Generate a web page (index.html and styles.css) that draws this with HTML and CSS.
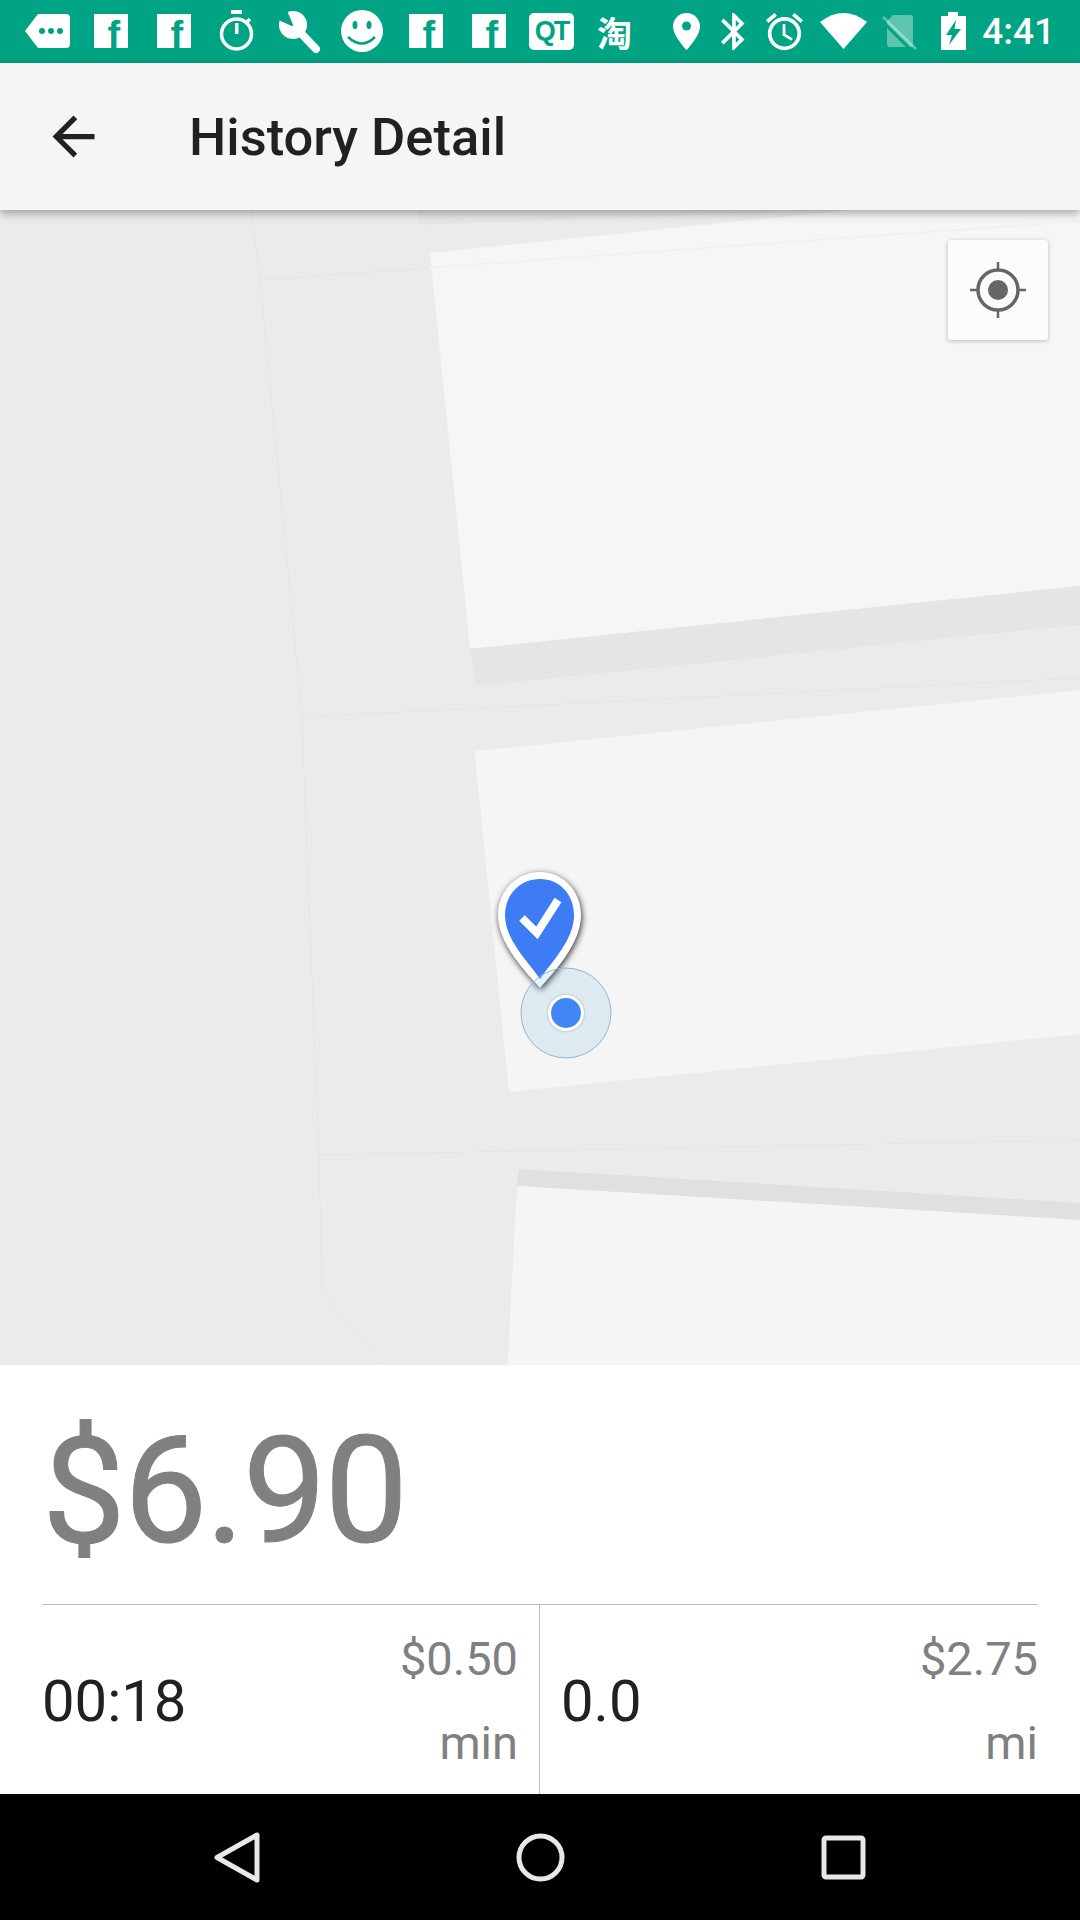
FILE: index.html
```html
<!DOCTYPE html>
<html lang="en">
<head>
    <meta charset="UTF-8">
    <meta name="viewport" content="width=device-width, initial-scale=1.0">
    <title>History Detail</title>
    <link rel="stylesheet" href="styles.css">
</head>
<body>
<div class="screen">
    <div class="status-bar">
        <div class="status-left">
            <div class="cell">
                <svg width="63" height="63" viewBox="0 0 63 63">
                    <path class="w" d="M22 14H50a4 4 0 0 1 4 4V44a4 4 0 0 1-4 4H22L9 31Z"/>
                    <circle class="t" cx="26" cy="31" r="3"/><circle class="t" cx="35" cy="31" r="3"/><circle class="t" cx="44" cy="31" r="3"/>
                </svg>
            </div>
            <div class="cell"><span class="fb">f</span></div>
            <div class="cell"><span class="fb">f</span></div>
            <div class="cell">
                <svg width="63" height="63" viewBox="205 0 63 63">
                    <circle cx="236.5" cy="34" r="15" fill="none" stroke="#fff" stroke-width="3.5"/>
                    <rect class="w" x="231" y="10" width="11" height="4"/>
                    <rect class="w" x="235" y="23" width="3.5" height="11"/>
                    <path d="M247 22l3-3" stroke="#fff" stroke-width="3.5"/>
                </svg>
            </div>
            <div class="cell">
                <svg width="63" height="63" viewBox="268 0 63 63">
                    <circle class="w" cx="293" cy="25" r="14"/>
                    <path class="t" d="M294 27L276 19L286 8Z"/>
                    <path d="M296 28L316 49" stroke="#fff" stroke-width="8" stroke-linecap="round"/>
                </svg>
            </div>
            <div class="cell">
                <svg width="63" height="63" viewBox="331 0 63 63">
                    <circle class="w" cx="362" cy="31" r="21"/>
                    <ellipse class="t" cx="355" cy="25" rx="2.5" ry="4"/><ellipse class="t" cx="369" cy="25" rx="2.5" ry="4"/>
                    <path d="M348 37Q362 50 375 37" fill="none" stroke="#00a383" stroke-width="2.5"/>
                </svg>
            </div>
            <div class="cell"><span class="fb">f</span></div>
            <div class="cell"><span class="fb">f</span></div>
            <div class="cell"><span class="qt">QT</span></div>
            <div class="cell"><span class="tao">淘</span></div>
        </div>
        <div class="status-right">
            <svg width="47" height="63" viewBox="665 0 47 63">
                <path class="w" d="M688.5 13C681 13 675 19 675 26.5C675 36 688.5 50 688.5 50C688.5 50 702 36 702 26.5C702 19 696 13 688.5 13Z"/>
                <circle class="t" cx="688.5" cy="26" r="4.5"/>
            </svg>
            <svg width="47" height="63" viewBox="712 0 47 63">
                <path class="w" transform="translate(713.75 9.3) scale(1.85)" d="M17.71 7.71L12 2h-1v7.59L6.41 5 5 6.41 10.59 12 5 17.59 6.41 19 11 14.41V22h1l5.71-5.71-4.3-4.29 4.3-4.29zM13 5.83l1.88 1.88L13 9.59V5.83zm1.88 10.46L13 18.17v-3.76l1.88 1.88z"/>
            </svg>
            <svg width="55" height="63" viewBox="759 0 55 63">
                <path class="w" transform="translate(764.3 9.56) scale(1.85)" d="M22 5.72l-4.6-3.86-1.29 1.53 4.6 3.86L22 5.72zM7.88 3.39L6.6 1.86 2 5.71l1.29 1.53 4.59-3.85zM12.5 8H11v6l4.75 2.85.75-1.23-4-2.37V8zM12 4c-4.97 0-9 4.03-9 9s4.02 9 9 9c4.97 0 9-4.03 9-9s-4.03-9-9-9zm0 16c-3.87 0-7-3.13-7-7s3.13-7 7-7 7 3.13 7 7-3.13 7-7 7z"/>
            </svg>
            <svg width="62" height="63" viewBox="814 0 62 63">
                <path class="w" d="M822 22Q845.5 4 869 22L845.5 49Z"/>
            </svg>
            <svg width="51" height="63" viewBox="876 0 51 63">
                <path fill="#fff" opacity=".36" d="M895 15H912a3 3 0 0 1 3 3V47H892a3 3 0 0 1-3-3V21Z"/>
                <path d="M883 20L915 52" stroke="#00a383" stroke-width="3"/>
                <path d="M885 17L918 49" stroke="#fff" stroke-width="2.5" opacity=".36"/>
            </svg>
            <svg width="57" height="63" viewBox="927 0 57 63">
                <path class="w" d="M950 12H960V16H968V50H943V16H950Z"/>
                <path class="t" d="M958 20L948 35H954L951 45L963 29H956.5Z"/>
            </svg>
            <span class="clock">4:41</span>
        </div>
    </div>

    <header class="app-bar">
        <svg class="back" width="63" height="63" viewBox="0 0 24 24">
            <path fill="#212121" d="M20 11H7.83l5.59-5.59L12 4l-8 8 8 8 1.41-1.41L7.83 13H20v-2z"/>
        </svg>
        <h1 class="title">History Detail</h1>
    </header>

    <div class="map">
        <svg class="map-canvas" width="1080" height="1155" viewBox="0 210 1080 1155">
            <path fill="#e6e6e6" d="M417 210L419 225L840 210Z"/>
            <path fill="#f6f6f6" d="M430 253L850 210H1080V586L470 649Z"/>
            <path fill="#e5e5e5" d="M470 649L476 686L1080 625V586Z"/>
            <path fill="#f5f5f5" d="M474.5 751L1080 690V1034L509 1092Z"/>
            <path fill="#e0e0e0" d="M518.6 1169L517 1186L1080 1220V1203Z"/>
            <path fill="#f5f5f5" d="M517 1186L1080 1220V1365H507.5Z"/>

            <g class="road-line">
                <path d="M251 210L260 280L302 717L305 800L319 1155L322 1292L384 1365"/>
                <path d="M260 280L428 268"/>
                <path d="M302 717L1080 678"/>
                <path d="M319 1155L1080 1140"/>
            </g>
            <path class="road-line-light" d="M428 268L1080 221"/>
            <path class="road-line-light" d="M560 918H1080"/>

            <g class="pin">
                <path fill="#fff" d="M540 872C516 872 498 891 498 915C498 944 526 972 540 988C554 972 581 944 581 915C581 891 563 872 540 872Z"/>
                <path fill="#3d7cf5" d="M540 879C520 879 505 895 505 915C505 940 528 961 540 979C552 961 574 940 574 915C574 895 560 879 540 879Z"/>
                <path d="M522 918L537 933L558 900" fill="none" stroke="#fff" stroke-width="8"/>
            </g>
            <circle cx="566" cy="1013" r="45" fill="rgba(90,170,215,.14)" stroke="#8db6da" stroke-width="1"/>
            <circle class="dot" cx="566" cy="1013" r="16.5" fill="#4285f4" stroke="#fff" stroke-width="3"/>
        </svg>
        <button class="locate">
            <svg width="60" height="60" viewBox="0 0 60 60">
                <circle cx="30" cy="30" r="20" fill="none" stroke="#666" stroke-width="3.5"/>
                <circle cx="30" cy="30" r="10" fill="#666"/>
                <path d="M30 2V10M30 50V58M2 30H10M50 30H58" stroke="#666" stroke-width="2.5"/>
            </svg>
        </button>
    </div>

    <section class="summary">
        <div class="price">$6.90</div>
        <div class="stats">
            <div class="stat stat-first">
                <span class="stat-value">00:18</span>
                <div class="stat-side">
                    <span>$0.50</span>
                    <span>min</span>
                </div>
            </div>
            <div class="stat stat-second">
                <span class="stat-value">0.0</span>
                <div class="stat-side">
                    <span>$2.75</span>
                    <span>mi</span>
                </div>
            </div>
        </div>
    </section>

    <nav class="nav-bar">
        <svg width="63" height="63" viewBox="0 0 63 63">
            <path class="nav-icon" d="M51 9V54L11 31.5Z"/>
        </svg>
        <svg width="63" height="63" viewBox="0 0 63 63">
            <circle class="nav-icon" cx="31.5" cy="31.5" r="21.5"/>
        </svg>
        <svg width="63" height="63" viewBox="0 0 63 63">
            <rect class="nav-icon" x="12" y="12" width="39" height="39" rx="2"/>
        </svg>
    </nav>
</div>
</body>
</html>
```

FILE: styles.css
```css
* {
    box-sizing: border-box;
}
body {
    margin: 0;
    font-family: Roboto, "Noto Sans CJK SC", sans-serif;
    background-color: #fff;
}
svg {
    display: block;
}
.w {
    fill: #fff;
}
.t {
    fill: #00a383;
}
.screen {
    width: 1080px;
    height: 1920px;
    display: flex;
    flex-direction: column;
    overflow: hidden;
}

/* status bar */
.status-bar {
    height: 63px;
    flex: none;
    display: flex;
    justify-content: space-between;
    padding-left: 16px;
    padding-right: 25px;
    background-color: #00a383;
    color: #fff;
}
.status-left,
.status-right {
    display: flex;
    align-items: center;
}
.cell {
    width: 63px;
    height: 63px;
    display: flex;
    align-items: center;
    justify-content: center;
}
.fb {
    width: 34px;
    height: 34px;
    margin-top: -1px;
    padding-top: 4px;
    padding-left: 14px;
    background-color: #fff;
    color: #00a383;
    font-family: "Liberation Sans", sans-serif;
    font-weight: 700;
    font-size: 38px;
    line-height: 34px;
}
.qt {
    width: 45px;
    height: 37px;
    border-radius: 5px;
    background-color: #fff;
    color: #00a383;
    font-family: "Liberation Sans", sans-serif;
    font-weight: 700;
    font-size: 27px;
    line-height: 37px;
    letter-spacing: -2px;
    text-align: center;
}
.tao {
    font-family: "Noto Sans CJK SC", sans-serif;
    font-weight: 700;
    font-size: 35px;
    line-height: 63px;
}
.clock {
    font-weight: 500;
    font-size: 37px;
    line-height: 63px;
}

/* app bar */
.app-bar {
    height: 147px;
    flex: none;
    position: relative;
    z-index: 2;
    display: flex;
    align-items: center;
    padding-left: 42px;
    background-color: #f5f5f5;
    box-shadow: 0 3px 9px rgba(0, 0, 0, 0.35);
}
.back {
    flex: none;
}
.title {
    margin: 0 0 0 84px;
    font-weight: 500;
    font-size: 52.5px;
    color: #212121;
}

/* map */
.map {
    height: 1155px;
    flex: none;
    position: relative;
    background-color: #ebebeb;
}
.map-canvas {
    position: absolute;
    left: 0;
    top: 0;
}
.road-line path {
    fill: none;
    stroke: #e5e5e5;
    stroke-width: 1;
}
.road-line-light {
    fill: none;
    stroke: #f0f0f0;
    stroke-width: 1.5;
}
.pin {
    filter: drop-shadow(1px 2px 3px rgba(0, 0, 0, 0.8));
}
.dot {
    filter: drop-shadow(0 0 1px rgba(0, 0, 0, 0.3));
}
.locate {
    position: absolute;
    top: 30px;
    right: 32px;
    width: 100px;
    height: 100px;
    padding: 0;
    display: flex;
    align-items: center;
    justify-content: center;
    border: none;
    border-radius: 3px;
    background-color: #fcfcfc;
    box-shadow: 0 1px 4px rgba(0, 0, 0, 0.25);
}

/* price and stats */
.summary {
    flex: 1;
    display: flex;
    flex-direction: column;
    padding: 0 42px;
    background-color: #fff;
}
.price {
    height: 239px;
    flex: none;
    padding-top: 39px;
    font-size: 149px;
    line-height: 175px;
    letter-spacing: -2px;
    color: #808080;
    -webkit-text-stroke: 1px #808080;
}
.stats {
    flex: 1;
    display: grid;
    grid-template-columns: 498px 498px;
    border-top: 1px solid #bdbdbd;
}
.stat {
    display: flex;
    align-items: center;
    justify-content: space-between;
}
.stat-first {
    padding-right: 21px;
    border-right: 1px solid #bdbdbd;
}
.stat-second {
    padding-left: 21px;
}
.stat-value {
    padding-top: 3px;
    font-size: 58px;
    color: #212121;
}
.stat-side {
    display: flex;
    flex-direction: column;
    gap: 23px;
    padding-top: 1px;
    text-align: right;
    font-size: 47px;
    line-height: 61px;
    color: #808080;
}

/* nav bar */
.nav-bar {
    height: 126px;
    flex: none;
    display: flex;
    align-items: center;
    justify-content: center;
    gap: 240px;
    background-color: #000;
}
.nav-icon {
    fill: none;
    stroke: #e8e8e8;
    stroke-width: 5;
    stroke-linejoin: round;
}
```
